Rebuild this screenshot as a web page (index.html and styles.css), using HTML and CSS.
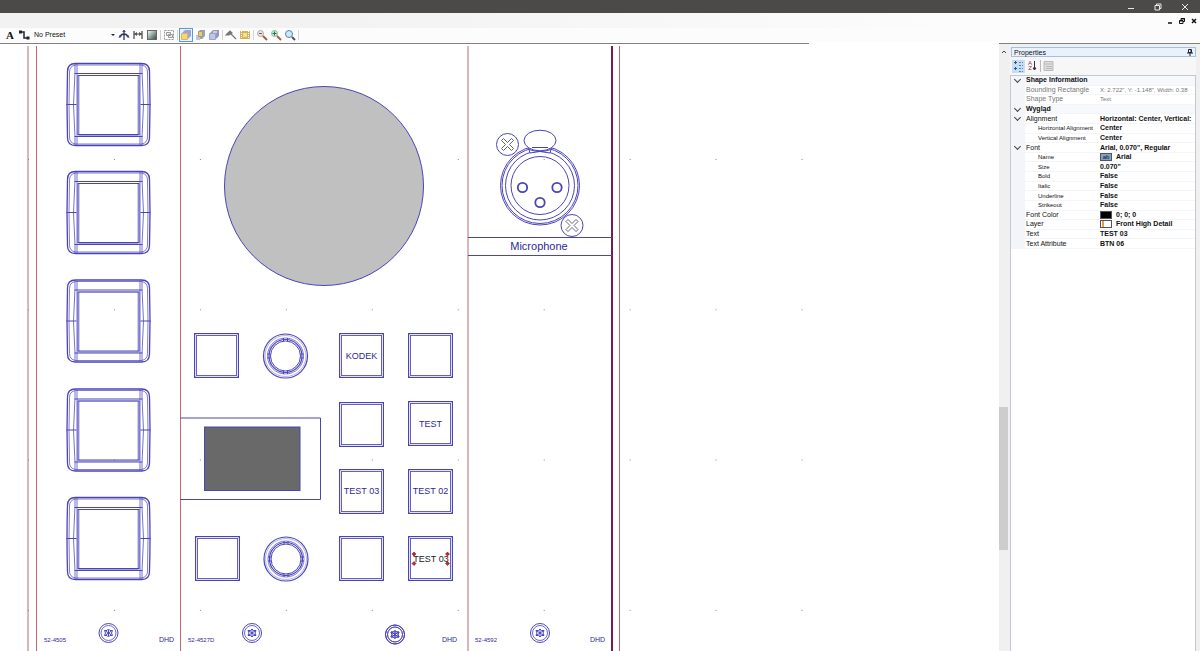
FILE: index.html
```
<!DOCTYPE html>
<html lang="en">
<head>
<meta charset="utf-8">
<title>Panel drawing</title>
<link rel="stylesheet" href="styles.css">
</head>
<body>
<header class="titlebar">
  <button class="win" aria-label="Minimize"><svg width="8" height="8"><path d="M1 5.500h6"/></svg></button>
  <button class="win" aria-label="Restore"><svg width="8" height="8"><path d="M1 2.500h4.500v4.500h-4.500zM2.500 2.500v-1.500h4.500v4.500h-1.500"/></svg></button>
  <button class="win" aria-label="Close"><svg width="8" height="8"><path d="M1 1l6 6M7 1l-6 6"/></svg></button>
</header>
<div class="menubar">
  <button class="mdi" aria-label="Minimize document"><svg width="6" height="6"><path d="M1 5h4" stroke-width="1.500"/></svg></button>
  <button class="mdi" aria-label="Restore document"><svg width="6" height="6"><path d="M.5 2.500h3.500v3h-3.500zM2 2.500v-2h3.500v3h-1.500M2 1h4M.5 3h3.500"/></svg></button>
  <button class="mdi" aria-label="Close document"><svg width="6" height="6"><path d="M1 1l4 4M5 1l-4 4" stroke-width="1.500"/></svg></button>
</div>
<nav class="toolbar" aria-label="Drawing tools">
  <button class="tool letter">A</button>
  <button class="tool" aria-label="Connector"><svg width="12" height="12"><path d="M2 3h4v6h4" fill="none" stroke="#223" stroke-width="1.500"/><path d="M1 1.500h3v3h-3zM8.500 7.500h3v3h-3z" fill="#223"/></svg></button>
  <label class="preset"><select aria-label="Preset"><option>No Preset</option></select></label>
  <button class="tool" aria-label="Anchor"><svg width="12" height="12"><path d="M6 1v10M2 8q1-3 4-3t4 3" fill="none" stroke="#336" stroke-width="1.300"/><path d="M4 3l2-2 2 2zM.5 9l1-3 2 2zM11.500 9l-1-3-2 2z" fill="#448"/></svg></button>
  <button class="tool" aria-label="Dimension"><svg width="12" height="12"><path d="M2 2v8M10 2v8M2 5h8" fill="none" stroke="#444" stroke-width="1.200"/><path d="M2 5l3-2v4zM10 5l-3-2v4z" fill="#555"/></svg></button>
  <button class="tool" aria-label="Fill"><svg width="12" height="12"><defs><linearGradient id="fg" x1="0" y1="0" x2="1" y2="1"><stop offset="0" stop-color="#fff"/><stop offset="1" stop-color="#254a3a"/></linearGradient></defs><rect x="1.500" y="1.500" width="9" height="9" fill="url(#fg)" stroke="#666"/></svg></button>
  <i class="sep"></i>
  <button class="tool" aria-label="Group"><svg width="12" height="12"><path d="M1.500 1.500h9v9h-9z" fill="none" stroke="#999" stroke-dasharray="2 1"/><path d="M3.500 3.500h4v3h-4zM5.500 5.500h4v3h-4z" fill="#eee" stroke="#999"/></svg></button>
  <i class="sep"></i>
  <button class="tool active" aria-label="Bring to front"><svg width="12" height="12"><path d="M2 4l3-3h6v6l-3 3z" fill="#99a5dc"/><path d="M1.500 4.500h6v6h-6z" fill="#f5d774" stroke="#d7b65d"/></svg></button>
  <button class="tool" aria-label="Bring forward"><svg width="12" height="12"><path d="M4 3l2-2h5v6l-3 3h-4z" fill="#969fc6"/><path d="M2 6h4v5h-4z" fill="#bdc4e4"/><path d="M4.500 2.500h4v5h-4z" fill="#e9cd71" stroke="#ae9c65"/></svg></button>
  <button class="tool" aria-label="Send to back"><svg width="12" height="12"><path d="M2 4l3-3h6v6l-3 3z" fill="#8f99c8"/><path d="M5 2h4v2h-4z" fill="#e9cd91"/><path d="M1.500 4.500h6v6h-6z" fill="#bbc6ec" stroke="#99a5d5"/></svg></button>
  <i class="sep"></i>
  <button class="tool" aria-label="Build"><svg width="12" height="12"><path d="M1 6l4-4 2 2-3 2zM5 4l6 6" fill="#777" stroke="#777" stroke-width="1.200"/></svg></button>
  <button class="tool" aria-label="Film"><svg width="12" height="12"><path d="M1 2h10v8h-10z" fill="#d1b25e"/><path d="M4 4h4v4h-4z" fill="#f8df8c"/><path d="M2.500 2v8M9.500 2v8" stroke="#fff" stroke-dasharray="1 1"/></svg></button>
  <i class="sep"></i>
  <button class="tool" aria-label="Zoom out"><svg width="12" height="12"><circle cx="4.500" cy="4.500" r="3" fill="#e5e5ed" stroke="#aaa"/><path d="M3 4.500h3" stroke="#a44"/><path d="M7 7l4 4" stroke="#a65d3d" stroke-width="2"/></svg></button>
  <button class="tool" aria-label="Zoom in"><svg width="12" height="12"><circle cx="4.500" cy="4.500" r="3" fill="#cee9da" stroke="#8ba"/><path d="M2.500 4.500h4M4.500 2.500v4" stroke="#297444"/><path d="M7 7l4 4" stroke="#a65d3d" stroke-width="2"/></svg></button>
  <button class="tool" aria-label="Zoom"><svg width="12" height="12"><circle cx="5" cy="5" r="3.500" fill="#cdeafb" stroke="#5886ad"/><path d="M8 8l3 3" stroke="#456" stroke-width="2"/></svg></button>
  <i class="sep"></i>
</nav>
<main class="work">
  <section class="canvas" aria-label="Drawing">
    <svg class="drawing" width="100%" height="100%">
      <defs>
        <pattern id="grid" x="28" y="159" width="85.950" height="150.300" patternUnits="userSpaceOnUse"><rect width="1" height="1" fill="#888"/></pattern>
        <g id="key">
          <path d="M9 .5h66q8 0 8 8q1 33 0 66q0 8-8 8h-66q-8 0-8-8q-1-33 0-66q0-8 8-8z" stroke-width="1.300"/>
          <path d="M9 2h66q6 1 6 7q1 32 0 65q0 6-6 7h-66q-6-1-6-7q-1-33 0-65q0-6 6-7z" opacity=".7"/>
          <path d="M8.500 1v8q-3 33 0 65v8M75.500 1v8q3 33 0 65v8M10.500 1v81M73.500 1v81" opacity=".75"/>
          <path d="M8 10.500h68M8 73.500h68M0 41.500h10M74 41.500h10"/>
          <rect x="11.500" y="12.500" width="61" height="59"/>
          <rect x="12.500" y="12.500" width="59" height="60" opacity=".5"/>
        </g>
        <g id="btn"><rect x=".5" y=".5" width="44" height="44"/><rect x="2.500" y="2.500" width="40" height="40" opacity=".85"/><path d="M0 0l3 3M45 0l-3 3M0 45l3-3M45 45l-3-3" opacity=".4"/><rect x="1.500" y="1.500" width="42" height="42" opacity=".15"/></g>
        <g id="knob"><circle r="22" stroke-width="1.200"/><circle r="20.500" opacity=".4"/><circle r="18" opacity=".7"/><circle r="16.500" stroke-width="1.200"/><circle r="15"/><path d="M-2-18v3M2-18v3M-2 18v-3M2 18v-3M-18-2h3M-18 2h3M18-2h-3M18 2h-3"/></g>
        <g id="bolt"><circle r="9.500"/><circle r="7.500" opacity=".8"/><path d="M0-4l1.500 1.500 2.500 0-1 2.500 1 2.500-2.500 0-1.500 1.500-1.500-1.500-2.500 0 1-2.500-1-2.500 2.500 0zM0-3v6M-3-2l6 4M-3 2l6-4"/></g>
        <g id="screw"><circle r="11"/><path d="M0-2l4-4 2 2-4 4 4 4-2 2-4-4-4 4-2-2 4-4-4-4 2-2z" stroke="#55556b" stroke-width=".9"/></g>
      </defs>
      <g transform="translate(0 -44)">
        <rect x="28" y="159" width="775" height="452" fill="url(#grid)"/>
        <g class="frame"><path d="M28 46v605M36.500 46v605M180.500 46v605M468 46v605M619.500 46v605"/><path class="edge" d="M612 46v605"/></g>
        <g class="ink">
          <use href="#key" x="66.500" y="63"/><use href="#key" x="66.500" y="171"/><use href="#key" x="66.500" y="279.500"/><use href="#key" x="66.500" y="388.500"/><use href="#key" x="66.500" y="497"/>
          <circle cx="324" cy="186" r="99.500" fill="#c0c0c0"/>
          <path d="M180.500 418h140v81.500h-140M468 237.500h144M468 255.500h144"/>
          <rect x="204.500" y="427" width="95.500" height="63.500" fill="#696969"/>
          <use href="#btn" x="194" y="333"/><use href="#btn" x="339" y="333"/><use href="#btn" x="408" y="333"/>
          <use href="#btn" x="339" y="402"/><use href="#btn" x="408" y="401"/>
          <use href="#btn" x="339" y="469"/><use href="#btn" x="408" y="469"/>
          <use href="#btn" x="195" y="536"/><use href="#btn" x="339" y="536"/><use href="#btn" x="408" y="536"/>
          <use href="#knob" x="285.500" y="356"/><use href="#knob" x="286" y="559"/>
          <circle cx="540" cy="185.500" r="39.500"/><circle cx="540" cy="185.500" r="38"/><circle cx="540" cy="185.500" r="34.500"/><circle cx="540" cy="185.500" r="29"/>
          <path d="M528 146l2 7q10-3 20 0l2-7z" fill="#fff"/>
          <ellipse cx="540" cy="140.500" rx="16" ry="10.300" fill="#fff"/><path d="M532 147.500h16M529 149.500q11 4 22 0"/>
          <g stroke-width="1.800"><circle cx="522.500" cy="187.500" r="4.700"/><circle cx="557" cy="187.500" r="4.700"/><circle cx="540" cy="202.500" r="4.700"/></g>
          <use href="#screw" x="507.500" y="144.500"/><use href="#screw" x="572" y="225.500"/>
          <use href="#bolt" x="108.500" y="633"/><use href="#bolt" x="252" y="633"/><use href="#bolt" x="395" y="634.500"/><use href="#bolt" x="395" y="634.500"/><use href="#bolt" x="540" y="633"/>
        </g>
        <g class="keytext"><text x="361.500" y="359">KODEK</text><text x="430.500" y="427">TEST</text><text x="361.500" y="494">TEST 03</text><text x="430.500" y="494">TEST 02</text><text class="picked" x="431" y="562">TEST 03</text></g>
        <path d="M414 552l2 2-2 2-2-2zM447.500 552l2 2-2 2-2-2zM414 561.500l2 2-2 2-2-2zM447.500 561.500l2 2-2 2-2-2z" fill="#c22" stroke="#722" stroke-width=".6"/>
        <text class="mic" x="539" y="250">Microphone</text>
        <g class="partno"><text x="44" y="642">52-4505</text><text x="188" y="642">52-4527D</text><text x="475" y="642">52-4592</text></g>
        <g class="brand"><text x="159" y="642">DHD</text><text x="442" y="642">DHD</text><text x="590" y="642">DHD</text></g>
      </g>
    </svg>
  </section>
  <div class="scroll"><button aria-label="Scroll up"><svg width="8" height="8"><path d="M2 5l2-2 2 2" fill="none" stroke="#444"/></svg></button><span class="before"></span><span class="thumb"></span><span class="after"></span></div>
  <aside class="props">
    <div class="props-title"><span>Properties</span><button aria-label="Pin"><svg width="6" height="7"><path d="M1.500 .5h3v3h-3zM0 4h6M3 4v3M4 1v3" fill="none" stroke="#223"/></svg></button></div>
    <div class="props-tools">
      <button class="on" aria-label="Categorized"><svg width="12" height="12"><path d="M1 2.500h3M2.500 1v3M1 8.500h3M2.500 7v3" stroke="#357"/><path d="M6 2.500h4M6 5.500h4M6 8.500h4M6 11.500h4" stroke="#6485aa" stroke-dasharray="2 1"/></svg></button>
      <button class="sort" aria-label="Sort alphabetically"><span>A<br>Z</span><svg width="5" height="10"><path d="M2.500 0v8M1 7l1.500 2 1.500-2z" stroke="#333" fill="#333"/></svg></button>
      <i></i>
      <button aria-label="Property pages" disabled><svg width="11" height="10"><path d="M1 .5h9v9h-9z" fill="#ddd" stroke="#bbb"/><path d="M1 3h9M3 5.500h6M3 7.500h6" stroke="#bbb"/></svg></button>
    </div>
    <div class="props-body">
      <table>
        <colgroup><col class="c-gutter"><col class="c-name"><col></colgroup>
        <tbody>
        <tr class="cat"><td><button class="fold" aria-label="Collapse Shape Information"></button></td><th colspan="2">Shape Information</th></tr>
        <tr class="ro"><td></td><th>Bounding Rectangle</th><td>X: 2.722", Y: -1.148", Width: 0.38</td></tr>
        <tr class="ro"><td></td><th>Shape Type</th><td>Text</td></tr>
        <tr class="cat"><td><button class="fold" aria-label="Collapse Wygląd"></button></td><th colspan="2">Wygląd</th></tr>
        <tr><td><button class="fold" aria-label="Collapse Alignment"></button></td><th>Alignment</th><td>Horizontal: Center, Vertical:</td></tr>
        <tr class="sub"><td></td><th>Horizontal Alignment</th><td>Center</td></tr>
        <tr class="sub"><td></td><th>Vertical Alignment</th><td>Center</td></tr>
        <tr><td><button class="fold" aria-label="Collapse Font"></button></td><th>Font</th><td>Arial, 0.070", Regular</td></tr>
        <tr class="sub"><td></td><th>Name</th><td><span class="swatch face">ab</span>Arial</td></tr>
        <tr class="sub"><td></td><th>Size</th><td>0.070"</td></tr>
        <tr class="sub"><td></td><th>Bold</th><td>False</td></tr>
        <tr class="sub"><td></td><th>Italic</th><td>False</td></tr>
        <tr class="sub"><td></td><th>Underline</th><td>False</td></tr>
        <tr class="sub"><td></td><th>Strikeout</th><td>False</td></tr>
        <tr><td></td><th>Font Color</th><td><span class="swatch black"></span>0; 0; 0</td></tr>
        <tr><td></td><th>Layer</th><td><span class="swatch layer"></span>Front High Detail</td></tr>
        <tr><td></td><th>Text</th><td>TEST 03</td></tr>
        <tr><td></td><th>Text Attribute</th><td>BTN 06</td></tr>
        </tbody>
      </table>
    </div>
  </aside>
</main>
</body>
</html>
```
FILE: styles.css
```
* { box-sizing: border-box; }
body { margin: 0; height: 100vh; display: flex; flex-direction: column; overflow: hidden; background: #fff; color: #111; font: 7px/9px "Liberation Sans", Arial, sans-serif; }
button { margin: 0; padding: 0; border: 0; background: none; color: inherit; font: inherit; display: flex; align-items: center; justify-content: center; }
svg { display: block; }
.titlebar { height: 13px; flex: none; display: flex; justify-content: flex-end; align-items: center; gap: 19px; padding-right: 11px; background: #4b4a48; }
.win path { fill: none; stroke: #e8e8e8; }
.menubar { height: 15px; flex: none; display: flex; justify-content: flex-end; align-items: center; gap: 6px; padding-right: 3px; background: linear-gradient(90deg, #f2f2f2 25%, #fcfcfc 80%); }
.mdi path { fill: none; stroke: #111; }
.toolbar { height: 14px; flex: none; display: flex; align-items: center; padding-left: 3px; background: #fcfcfc; }
.tool { width: 14px; height: 14px; flex: none; }
.tool.letter { font: bold 11px/14px "Liberation Serif", serif; }
.tool.active { border: 1px solid #5b9bd5; background: #eaf3fc; }
.preset { width: 84px; margin-left: 2px; padding-left: 1px; display: flex; align-items: center; justify-content: space-between; }
.preset::after { content: ""; border: 2px solid transparent; border-top-color: #222; border-bottom: 0; margin-right: 2px; }
.preset select { flex: 1; appearance: none; border: 0; padding: 0; background: none; color: #111; font: 7px/12px "Liberation Sans", Arial, sans-serif; }
.sep { width: 1px; height: 10px; margin: 0 1px; background: #d4d4d4; flex: none; }
.work { flex: 1; min-height: 0; display: flex; }
.canvas { flex: 1; min-width: 0; padding-top: 2px; background: linear-gradient(#808080, #808080) 0 1px / 81% 1px no-repeat #fff; }
.drawing { overflow: hidden; }
.frame path { fill: none; stroke: #bd6a70; }
.frame .edge { stroke: #702050; stroke-width: 2; }
.ink { fill: none; stroke: #4a44ba; stroke-width: 1; }
text { font-family: "Liberation Sans", Arial, sans-serif; fill: #2e2898; }
.keytext text { font-size: 9px; text-anchor: middle; }
.keytext .picked { fill: #222; }
.mic { font-size: 11px; text-anchor: middle; }
.partno text { font-size: 6px; }
.brand text { font-size: 7px; }
.scroll { width: 11px; flex: none; display: flex; flex-direction: column; padding-right: 2px; border-top: 1px solid #808080; background: #f0f0f0; margin-top: 1px; }
.scroll button { height: 16px; }
.before { flex: 347; }
.thumb { flex: 143; background: #cdcdcd; }
.after { flex: 101; }
.props { width: 190px; flex: none; display: flex; flex-direction: column; margin-top: 1px; padding: 3px 4px 0 0; border-top: 1px solid #808080; background: #f0f0f0; }
.props-title { height: 10px; margin-left: 1px; flex: none; display: flex; justify-content: space-between; align-items: center; padding: 0 2px; border: 1px solid #a4c0de; background: #e8f1fc; }
.props-tools { height: 18px; flex: none; display: flex; align-items: center; gap: 1px; padding-left: 2px; background: #f7f7f7; }
.props-tools button { width: 13px; height: 13px; }
.props-tools .on { background: #c5def5; }
.props-tools i { width: 1px; height: 12px; background: #bbb; }
.sort span { font-size: 6px; line-height: 5px; color: #834; }
.props-body { flex: 1; border: 1px solid #c4c8d0; border-bottom: 0; background: #fff; overflow: hidden; }
table { width: 100%; height: 173px; table-layout: fixed; border-collapse: collapse; }
.c-gutter { width: 14px; }
.c-name { width: 74px; }
td, th { padding: 0; white-space: nowrap; text-align: left; font-weight: bold; line-height: 8px; overflow: hidden; border-bottom: 1px solid #f4f5f9; }
th { font-weight: normal; }
th:nth-child(2) { padding-left: 1px; }
td:first-child { background: #f3f5fb; }
td:nth-child(3) { padding-left: 1px; }
.cat th { font-weight: bold; background: #f6f8fc; }
.ro th, .ro td { color: #777; font-weight: normal; }
.ro td { font-size: 6px; }
.sub th:nth-child(2) { padding-left: 13px; font-size: 6px; }
.fold { width: 13px; height: 8px; }
.fold::after { content: ""; width: 4px; height: 4px; border: solid #444; border-width: 0 1px 1px 0; transform: translateY(-1px) rotate(45deg); }
.swatch { display: inline-block; vertical-align: top; width: 12px; height: 8px; margin-right: 4px; border: 1px solid #555; font: 6px/6px "Liberation Sans", sans-serif; text-align: center; }
.face { background: #7fa1c9; }
.black { background: #000; }
.layer { background: linear-gradient(90deg, #fff 1px, #e0a050 1px, #e0a050 3px, #fff 3px); }
```
